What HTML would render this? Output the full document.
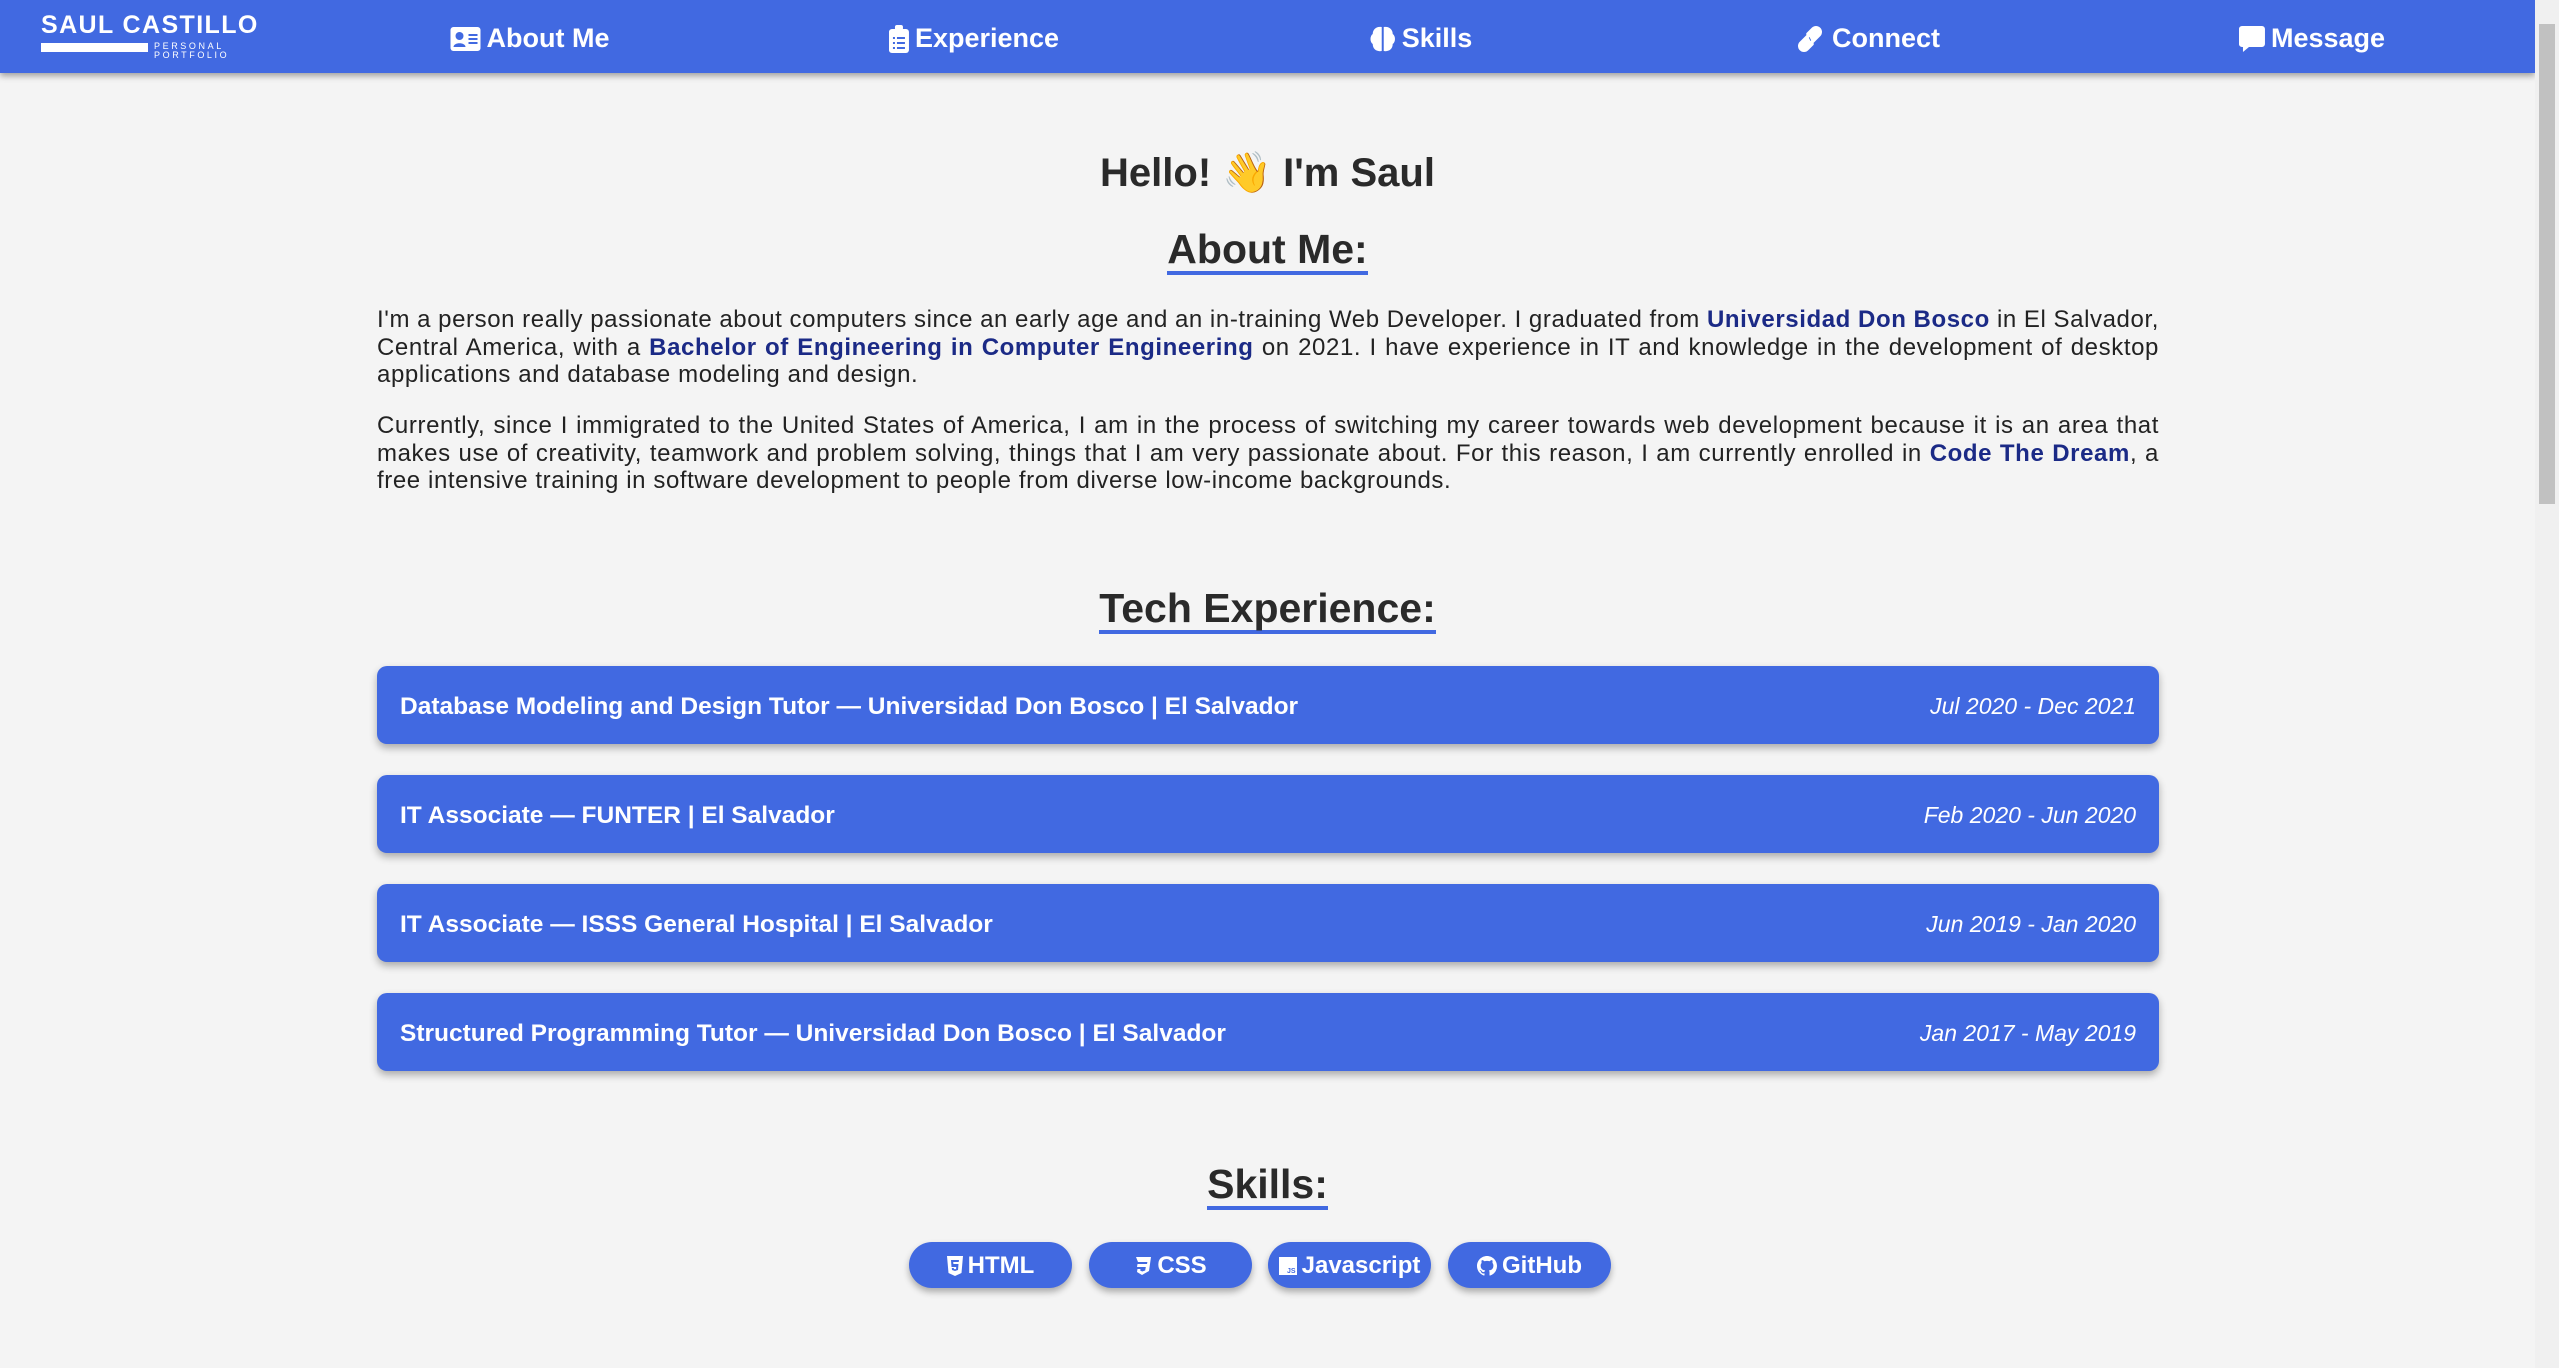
<!DOCTYPE html>
<html><head><meta charset="utf-8">
<style>
*{margin:0;padding:0;box-sizing:border-box}
html,body{width:2559px;height:1368px;overflow:hidden;background:#f4f4f4;font-family:"Liberation Sans",sans-serif;color:#222}
.nav{position:absolute;left:0;top:0;width:2535px;height:73px;background:#4169e1;box-shadow:0 3px 6px rgba(0,0,0,.35);color:#fff}
.sb{position:absolute;right:0;top:0;width:24px;height:1368px;background:#f0f0f0}
.sb .th{position:absolute;left:4px;top:24px;width:16px;height:480px;background:#c1c1c1}
.logo{position:absolute;left:41px;top:11px;font-weight:bold;font-size:25px;letter-spacing:1.4px}
.bar{position:absolute;left:41px;top:43px;width:107px;height:9px;background:#fff}
.pp{position:absolute;left:154px;top:42px;font-size:9px;letter-spacing:2.6px;line-height:9px}
.ni{position:absolute;top:23px;font-weight:bold;font-size:27px;transform:translateX(-50%);white-space:nowrap;display:flex;align-items:center;gap:6px}
.ni svg{fill:#fff}
h1{position:absolute;left:0;width:2535px;text-align:center;font-size:40px;color:#2a2a2a;font-weight:bold}
.h2{position:absolute;left:0;width:2535px;text-align:center}
.h2 span{font-size:41px;font-weight:bold;color:#2a2a2a;display:inline-block;border-bottom:4px solid #4169e1;line-height:40px;padding-bottom:2px}
.p{position:absolute;left:377px;width:1782px;font-size:24px;letter-spacing:0.6px;line-height:27.5px;color:#222}
.p div{text-align:justify;text-align-last:justify;white-space:nowrap;word-spacing:-1px}
.p div.l{text-align-last:left;word-spacing:0}
.p b{color:#1b2a86}
.card{position:absolute;left:377px;width:1782px;height:78px;background:#4169e1;border-radius:10px;box-shadow:0 4px 8px rgba(0,0,0,.3);color:#fff;display:flex;justify-content:space-between;align-items:center;padding:3px 23px 0;font-size:24.5px}
.card b{font-weight:bold}
.card i{font-size:23px}
.btn{position:absolute;top:1242px;width:163px;height:46px;border-radius:23px;background:#4169e1;box-shadow:0 4px 7px rgba(0,0,0,.3);color:#fff;font-weight:bold;font-size:24px;display:flex;align-items:center;justify-content:center;gap:5px;padding-top:2px}
.btn svg{fill:#fff}
</style></head><body>
<div class="nav">
<div class="logo">SAUL CASTILLO</div>
<div class="bar"></div>
<div class="pp">PERSONAL<br>PORTFOLIO</div>
<div class="ni" style="left:530px"><svg width="30" height="24" viewBox="0 0 30 24"><rect x="0" y="0" width="30" height="24" rx="3"/><circle cx="9" cy="9" r="4" fill="#4169e1"/><path d="M3 20c0-5 12-5 12 0z" fill="#4169e1"/><rect x="18" y="7" width="9" height="2" fill="#4169e1"/><rect x="18" y="11" width="9" height="2" fill="#4169e1"/><rect x="18" y="15" width="9" height="2" fill="#4169e1"/></svg>About Me</div>
<div class="ni" style="left:974px"><svg width="20" height="28" viewBox="0 0 20 28"><rect x="0" y="4" width="20" height="24" rx="3"/><rect x="6" y="0" width="8" height="7" rx="2"/><rect x="4" y="12" width="2" height="2" fill="#4169e1"/><rect x="8" y="12" width="8" height="2" fill="#4169e1"/><rect x="4" y="17" width="2" height="2" fill="#4169e1"/><rect x="8" y="17" width="8" height="2" fill="#4169e1"/><rect x="4" y="22" width="2" height="2" fill="#4169e1"/><rect x="8" y="22" width="8" height="2" fill="#4169e1"/></svg>Experience</div>
<div class="ni" style="left:1421px"><svg width="26" height="28" viewBox="0 0 26 28"><path d="M12 2C6 1 3 5 3 9c-3 2-3 8 0 10 0 5 4 8 9 7zM14 2c6-1 9 3 9 7 3 2 3 8 0 10 0 5-4 8-9 7z"/></svg>Skills</div>
<div class="ni" style="left:1867px"><svg width="32" height="28" viewBox="0 0 32 28" fill="none" stroke="#fff" stroke-width="3.5" stroke-linecap="round"><path d="M14 11l-7 7a4 4 0 006 6l5-5M18 17l7-7a4 4 0 00-6-6l-5 5"/></svg>Connect</div>
<div class="ni" style="left:2312px"><svg width="26" height="28" viewBox="0 0 26 28"><path d="M3 1h20a3 3 0 013 3v15a3 3 0 01-3 3H10l-6 5v-5H3a3 3 0 01-3-3V4a3 3 0 013-3z"/></svg>Message</div>
</div>
<div class="sb"><div class="th"></div></div>

<h1 style="top:149px">Hello! 👋 I'm Saul</h1>
<div class="h2" style="top:229px"><span>About Me:</span></div>
<div class="p" style="top:306px">
<div>I'm a person really passionate about computers since an early age and an in-training Web Developer. I graduated from <b>Universidad Don Bosco</b> in El Salvador,</div>
<div>Central America, with a <b>Bachelor of Engineering in Computer Engineering</b> on 2021. I have experience in IT and knowledge in the development of desktop</div>
<div class="l">applications and database modeling and design.</div>
</div>
<div class="p" style="top:412px">
<div>Currently, since I immigrated to the United States of America, I am in the process of switching my career towards web development because it is an area that</div>
<div>makes use of creativity, teamwork and problem solving, things that I am very passionate about. For this reason, I am currently enrolled in <b>Code The Dream</b>, a</div>
<div class="l">free intensive training in software development to people from diverse low-income backgrounds.</div>
</div>

<div class="h2" style="top:588px"><span>Tech Experience:</span></div>
<div class="card" style="top:666px"><b>Database Modeling and Design Tutor — Universidad Don Bosco | El Salvador</b><i>Jul 2020 - Dec 2021</i></div>
<div class="card" style="top:775px"><b>IT Associate — FUNTER | El Salvador</b><i>Feb 2020 - Jun 2020</i></div>
<div class="card" style="top:884px"><b>IT Associate — ISSS General Hospital | El Salvador</b><i>Jun 2019 - Jan 2020</i></div>
<div class="card" style="top:993px"><b>Structured Programming Tutor — Universidad Don Bosco | El Salvador</b><i>Jan 2017 - May 2019</i></div>

<div class="h2" style="top:1164px"><span>Skills:</span></div>
<div class="btn" style="left:909px"><svg width="16" height="20" viewBox="0 0 16 20"><path d="M0 0h16l-1.5 17L8 20 1.5 17z"/><path d="M4 4h8l-.3 2H6.2l.2 2h5.1l-.5 6L8 15l-3-1-.2-2h2l.1 1 1.1.3 1.1-.3.1-2H4.5z" fill="#4169e1"/></svg>HTML</div>
<div class="btn" style="left:1089px"><svg width="18" height="20" viewBox="0 0 18 20"><path d="M2 1h15l-2 14-7 4-5-3 .5-3h3l-.3 1.5 2 1 3-1 .6-3.5H3l.5-3h9.5l.4-2H4z"/></svg>CSS</div>
<div class="btn" style="left:1268px"><svg width="18" height="18" viewBox="0 0 18 18"><rect width="18" height="18"/><text x="8" y="16" font-size="7" fill="#4169e1" font-family="Liberation Sans" font-weight="bold">JS</text></svg>Javascript</div>
<div class="btn" style="left:1448px"><svg width="20" height="20" viewBox="0 0 16 16"><path d="M8 0C3.58 0 0 3.580 0 8c0 3.54 2.290 6.53 5.470 7.59.4.07.55-.17.55-.38v-1.33c-2.230.48-2.700-1.070-2.700-1.070-.36-.92-.89-1.170-.89-1.170-.73-.5.06-.49.06-.49.8.06 1.230.83 1.230.83.71 1.220 1.870.87 2.330.66.07-.52.28-.87.51-1.070-1.780-.2-3.640-.89-3.640-3.950 0-.87.31-1.590.82-2.150-.08-.2-.36-1.020.08-2.120 0 0 .67-.21 2.200.82a7.6 7.6 0 014 0c1.530-1.040 2.200-.82 2.200-.82.44 1.100.16 1.920.08 2.120.51.56.82 1.270.82 2.150 0 3.070-1.870 3.750-3.650 3.950.29.25.54.73.54 1.480v2.200c0 .21.15.46.55.38A8.010 8.010 0 0016 8c0-4.420-3.580-8-8-8z"/></svg>GitHub</div>
</body></html>
